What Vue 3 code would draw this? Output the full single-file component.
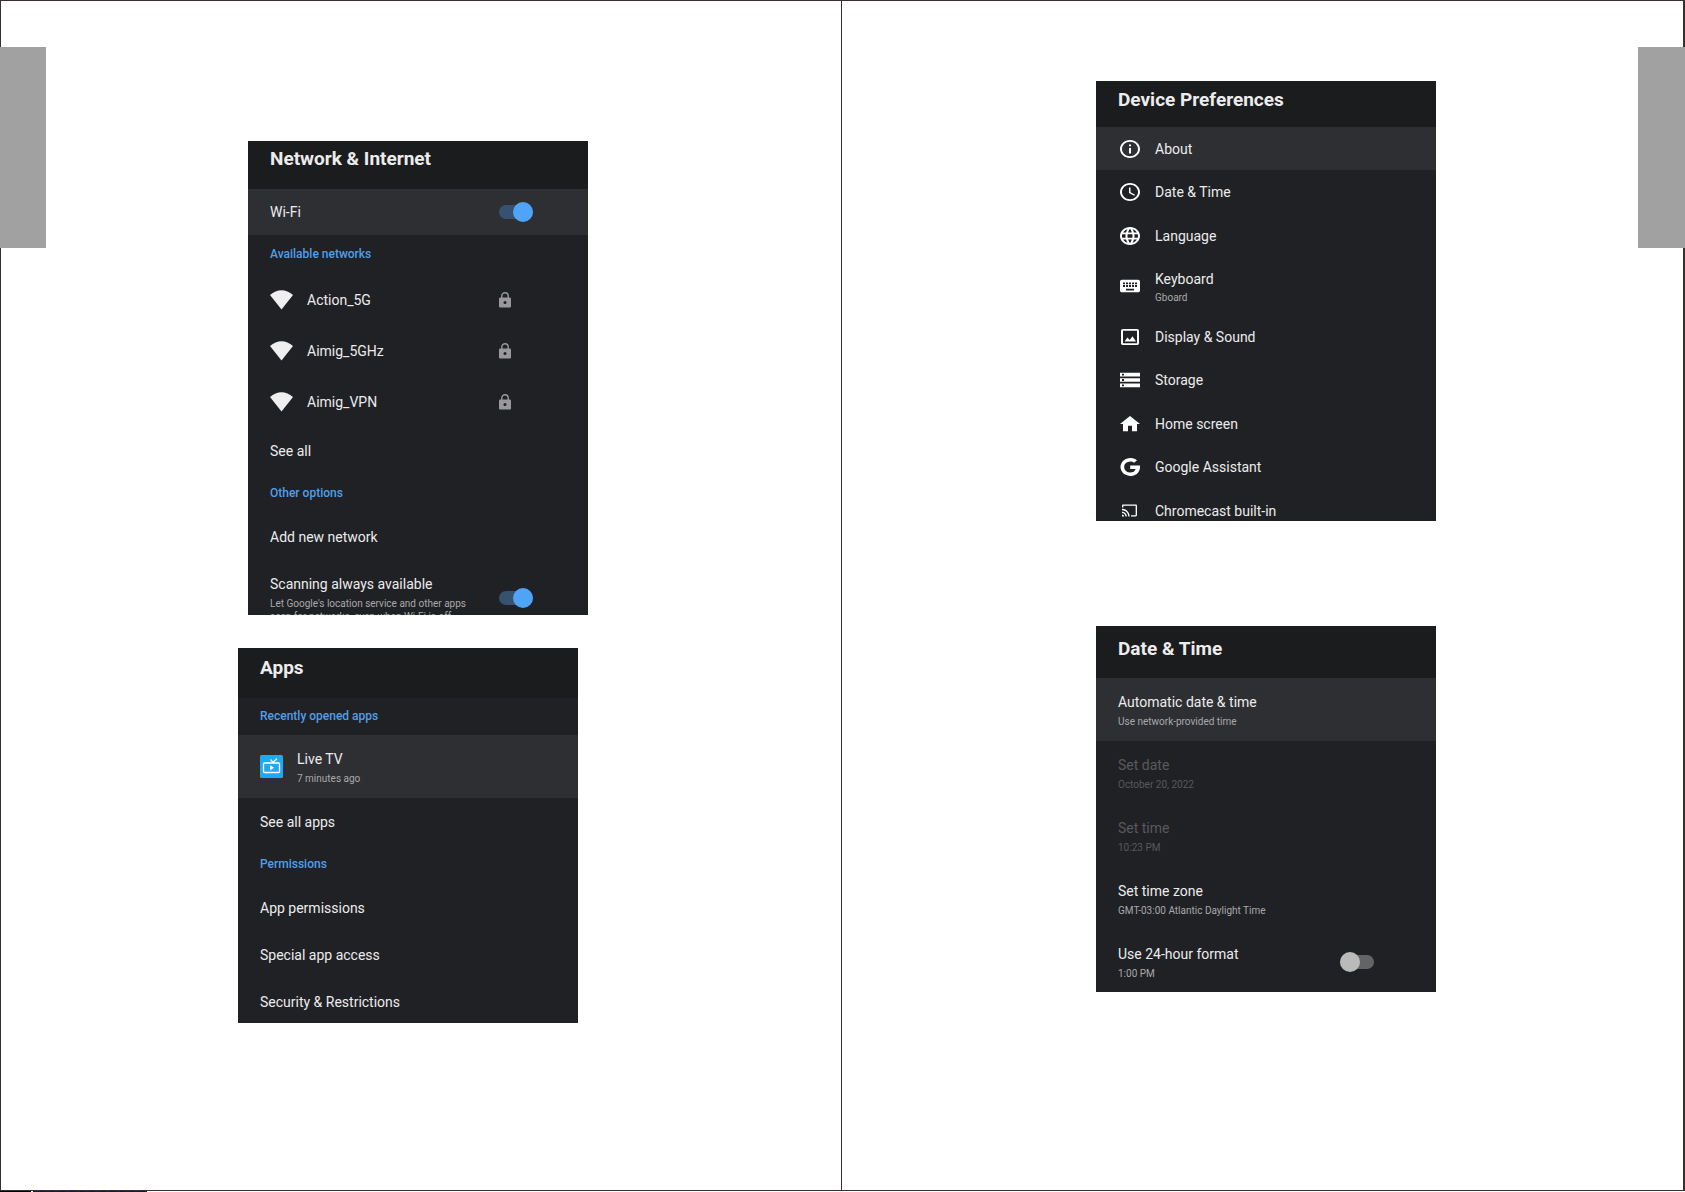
<script setup>
import { ref } from 'vue'

const icons = {
  info: 'M11 7h2v2h-2zm0 4h2v6h-2zm1-9C6.48 2 2 6.48 2 12s4.48 10 10 10 10-4.48 10-10S17.52 2 12 2zm0 18c-4.41 0-8-3.59-8-8s3.59-8 8-8 8 3.59 8 8-3.59 8-8 8z',
  clock: 'M11.99 2C6.47 2 2 6.48 2 12s4.47 10 9.99 10C17.52 22 22 17.52 22 12S17.52 2 11.99 2zM12 20c-4.42 0-8-3.58-8-8s3.58-8 8-8 8 3.58 8 8-3.58 8-8 8zm.5-13H11v6l5.25 3.15.75-1.23-4.5-2.67z',
  globe: 'M11.99 2C6.47 2 2 6.48 2 12s4.47 10 9.99 10C17.52 22 22 17.52 22 12S17.52 2 11.99 2zm6.93 6h-2.95c-.32-1.25-.78-2.45-1.38-3.56 1.84.63 3.37 1.91 4.33 3.56zM12 4.04c.83 1.2 1.48 2.53 1.91 3.96h-3.82c.43-1.43 1.08-2.76 1.91-3.96zM4.26 14C4.1 13.36 4 12.69 4 12s.1-1.36.26-2h3.38c-.08.66-.14 1.32-.14 2s.06 1.34.14 2H4.26zm.82 2h2.95c.32 1.25.78 2.45 1.38 3.56-1.84-.63-3.37-1.9-4.33-3.56zm2.95-8H5.08c.96-1.66 2.49-2.93 4.33-3.56C8.81 5.55 8.35 6.75 8.03 8zM12 19.96c-.83-1.2-1.48-2.53-1.91-3.96h3.82c-.43 1.43-1.08 2.76-1.91 3.96zM14.34 14H9.66c-.09-.66-.16-1.32-.16-2s.07-1.35.16-2h4.68c.09.65.16 1.32.16 2s-.07 1.34-.16 2zm.25 5.56c.6-1.11 1.06-2.31 1.38-3.56h2.95c-.96 1.65-2.49 2.93-4.33 3.56zM16.36 14c.08-.66.14-1.32.14-2s-.06-1.34-.14-2h3.38c.16.64.26 1.31.26 2s-.1 1.36-.26 2h-3.38z',
  keyboard: 'M20 5H4c-1.1 0-2 .9-2 2v10c0 1.1.9 2 2 2h16c1.1 0 2-.9 2-2V7c0-1.100-.9-2-2-2zm-9 3h2v2h-2V8zm0 3h2v2h-2v-2zM8 8h2v2H8V8zm0 3h2v2H8v-2zm-1 2H5v-2h2v2zm0-3H5V8h2v2zm9 7H8v-2h8v2zm0-4h-2v-2h2v2zm0-3h-2V8h2v2zm3 3h-2v-2h2v2zm0-3h-2V8h2v2z',
  display: 'M5 3h14c1.100 0 2 .9 2 2v14c0 1.100-.9 2-2 2H5c-1.100 0-2-.9-2-2V5c0-1.100.9-2 2-2zm0 2v14h14V5H5zm1.500 12l3-4.500 2.200 2.800 2.800-4 3.500 5.700z',
  storage: 'M2 20h20v-4H2v4zm2-3h2v2H4v-2zM2 4v4h20V4H2zm4 3H4V5h2v2zm-4 7h20v-4H2v4zm2-3h2v2H4v-2z',
  home: 'M10 20v-6h4v6h5v-8h3L12 3 2 12h3v8z',
  google: 'M22 10.200H12.200v3.900h5.400c-.6 2.500-2.700 4-5.400 4a6.100 6.100 0 0 1 0-12.200c1.500 0 2.900.5 3.900 1.400l2.900-2.900A10 10 0 1 0 12.200 22C17.900 22 22.600 18 22 10.200z',
  cast: 'M20.500 4h-17C2.700 4 2 4.700 2 5.600V8h1.800V5.800h16.400v12.400H14V20h6.500c.8 0 1.500-.7 1.500-1.600V5.600c0-.9-.7-1.600-1.500-1.600zM2 17.200V20h2.800c0-1.600-1.200-2.800-2.800-2.800zm0-3.700v1.800c2.600 0 4.700 2.100 4.700 4.700h1.800c0-3.600-2.900-6.500-6.500-6.500zm0-3.700v1.800c4.600 0 8.400 3.800 8.400 8.400h1.800C12.200 14.400 7.600 9.800 2 9.800z'
}

const network = ref([
  { title: 'Wi-Fi', toggle: true, on: true, active: true },
  { section: 'Available networks' },
  { title: 'Action_5G', wifi: true },
  { title: 'Aimig_5GHz', wifi: true },
  { title: 'Aimig_VPN', wifi: true },
  { title: 'See all' },
  { section: 'Other options' },
  { title: 'Add new network' },
  {
    title: 'Scanning always available',
    sub: ["Let Google's location service and other apps", 'scan for networks, even when Wi-Fi is off'],
    toggle: true,
    on: true
  }
])

const apps = ref([
  { section: 'Recently opened apps' },
  { title: 'Live TV', sub: ['7 minutes ago'], tv: true, active: true },
  { title: 'See all apps' },
  { section: 'Permissions' },
  { title: 'App permissions' },
  { title: 'Special app access' },
  { title: 'Security & Restrictions' }
])

const device = ref([
  { title: 'About', icon: 'info', active: true },
  { title: 'Date & Time', icon: 'clock' },
  { title: 'Language', icon: 'globe' },
  { title: 'Keyboard', sub: ['Gboard'], icon: 'keyboard' },
  { title: 'Display & Sound', icon: 'display' },
  { title: 'Storage', icon: 'storage' },
  { title: 'Home screen', icon: 'home' },
  { title: 'Google Assistant', icon: 'google' },
  { title: 'Chromecast built-in', icon: 'cast' }
])

const dateTime = ref([
  { title: 'Automatic date & time', sub: ['Use network-provided time'], active: true },
  { title: 'Set date', sub: ['October 20, 2022'], disabled: true },
  { title: 'Set time', sub: ['10:23 PM'], disabled: true },
  { title: 'Set time zone', sub: ['GMT-03:00 Atlantic Daylight Time'] },
  { title: 'Use 24-hour format', sub: ['1:00 PM'], toggle: true, on: false }
])

const pages = [
  [
    { name: 'network', heading: 'Network & Internet', rows: network },
    { name: 'apps', heading: 'Apps', rows: apps }
  ],
  [
    { name: 'device', heading: 'Device Preferences', rows: device },
    { name: 'date', heading: 'Date & Time', rows: dateTime }
  ]
]
</script>

<template>
  <main class="spread">
    <div v-for="(panels, p) in pages" :key="p" class="page">
      <section v-for="panel in panels" :key="panel.name" class="panel" :class="panel.name">
        <h2 class="heading">{{ panel.heading }}</h2>
        <template v-for="(row, i) in panel.rows.value" :key="i">
          <h3 v-if="row.section" class="section">{{ row.section }}</h3>
          <component
            :is="row.toggle ? 'label' : 'button'"
            v-else
            class="row"
            :class="{ active: row.active, tall: row.sub, wifi: row.wifi, disabled: row.disabled }"
            :disabled="row.disabled || undefined"
          >
            <span v-if="row.wifi || row.tv || row.icon" class="lead">
              <svg v-if="row.wifi" class="wifi-icon" viewBox="0 0 23 20" aria-hidden="true">
                <path d="M0 5C7-1.500 16-1.500 23 5L11.500 19.500z" />
              </svg>
              <svg v-else-if="row.tv" class="tv-icon" viewBox="0 0 23 23" aria-hidden="true">
                <rect width="23" height="23" rx="1.500" fill="#1cabf3" />
                <rect x="3.500" y="8" width="16" height="9.500" rx="1" fill="none" stroke="#fff" stroke-width="1.300" />
                <path d="M10.500 4.500L13 7.500L17 3.500" fill="none" stroke="#fff" stroke-width="1.200" />
                <path d="M10 10.200v5l4-2.500z" fill="#fff" />
              </svg>
              <svg
                v-else
                class="icon"
                :class="row.icon"
                viewBox="2 2 20 20"
                preserveAspectRatio="none"
                aria-hidden="true"
              >
                <path :d="icons[row.icon]" fill-rule="evenodd" />
              </svg>
            </span>
            <span class="text">
              <span class="title">{{ row.title }}</span>
              <span v-if="row.sub" class="sub">
                <span v-for="line in row.sub" :key="line" class="line">{{ line }}</span>
              </span>
            </span>
            <span v-if="row.wifi" class="trail">
              <svg class="lock" viewBox="0 0 12 16" aria-hidden="true">
                <path d="M2.800 6V4a3.200 3.200 0 0 1 6.400 0v2" fill="none" stroke="#99999b" stroke-width="1.400" />
                <rect y="5.500" width="12" height="10" rx="1.300" fill="#99999b" />
                <circle cx="6" cy="10.500" r="1.500" fill="#202124" />
              </svg>
            </span>
            <span v-else-if="row.toggle" class="trail">
              <input v-model="row.on" class="switch" type="checkbox" />
            </span>
          </component>
        </template>
      </section>
    </div>
    <div class="tab tab-left"></div>
    <div class="tab tab-right"></div>
    <div class="strip"></div>
  </main>
</template>

<style>
body {
  margin: 0;
  background: #fff;
}
</style>

<style scoped>
.spread {
  position: relative;
  box-sizing: border-box;
  display: grid;
  grid-template-columns: 841fr 844fr;
  min-height: 100vh;
  padding-bottom: 1px;
  font-family: Roboto, "Liberation Sans", sans-serif;
}

.page {
  box-sizing: border-box;
  display: flex;
  flex-direction: column;
  align-items: center;
  border: 1px solid #3a2f30;
}

.page:first-child {
  border-right: 0;
  padding: 140px 6px 60px 0;
}

.page:nth-child(2) {
  border-right-width: 2px;
  padding: 80px 0 60px 7px;
}

.panel {
  width: 340px;
  max-width: 100%;
  overflow: hidden;
  background: #202124;
  color: #ececed;
}

.network {
  height: 474px;
}

.apps {
  height: 375px;
  margin-top: 33px;
  margin-right: 20px;
}

.device {
  height: 440px;
}

.date {
  height: 366px;
  margin-top: 105px;
}

.heading {
  box-sizing: border-box;
  height: 48px;
  margin: 0;
  padding: 6px 22px 0;
  background: #1b1c1e;
  font-size: 19px;
  font-weight: 700;
  line-height: 24px;
}

.apps .heading {
  height: 50px;
  padding-top: 8px;
}

.device .heading {
  height: 46px;
  padding-top: 7px;
}

.date .heading {
  height: 52px;
  padding-top: 11px;
}

.section {
  margin: 0;
  padding: 0 22px;
  color: #4f9fea;
  font-size: 12px;
  font-weight: 500;
  line-height: 39px;
}

.heading + .section {
  line-height: 37px;
}

.row {
  box-sizing: border-box;
  display: flex;
  align-items: center;
  width: 100%;
  height: 47px;
  margin: 0;
  padding: 0 55px 0 22px;
  border: 0;
  background: none;
  color: inherit;
  font: inherit;
  text-align: left;
  cursor: pointer;
}

.network .active {
  height: 46px;
}

.row.wifi {
  height: 51px;
}

.row.tall {
  height: auto;
}

.row.active {
  background: #2e2f33;
}

.row.disabled {
  color: #59595c;
  cursor: default;
}

.device .row:not(.tall) {
  height: 43px;
}

.device .row:not(.tall):nth-child(odd) {
  height: 44px;
}

.date .row {
  padding-right: 62px;
}

.lead {
  display: flex;
  flex: 0 0 23px;
  justify-content: center;
  margin-right: 14px;
}

.text {
  flex: 1;
  white-space: nowrap;
}

.tall .text {
  padding: 14px 0 13px;
}

.device .tall .text {
  padding: 12px 0 11px;
}

.title {
  display: block;
  font-size: 14px;
  line-height: 20px;
}

.sub {
  display: block;
  margin-top: 3px;
  color: #a9a9ab;
  font-size: 10px;
  line-height: 13px;
}

.device .sub {
  margin-top: 2px;
}

.disabled .sub {
  color: inherit;
}

.line {
  display: block;
}

.trail {
  display: flex;
  flex: 0 0 34px;
}

.wifi-icon {
  width: 23px;
  height: 20px;
  fill: #efefef;
}

.tv-icon {
  width: 23px;
  height: 23px;
}

.icon {
  width: 20px;
  height: 18px;
  fill: #fff;
}

.icon.cast {
  width: 15px;
  height: 15px;
}

.lock {
  width: 12px;
  height: 16px;
}

.switch {
  display: flex;
  align-items: center;
  width: 34px;
  height: 14px;
  margin: 0;
  border-radius: 7px;
  background: #636466;
  appearance: none;
  cursor: pointer;
}

.switch::before {
  width: 20px;
  height: 20px;
  border-radius: 50%;
  background: #bababa;
  content: "";
}

.switch:checked {
  justify-content: flex-end;
  background: #36526f;
}

.switch:checked::before {
  background: #4fa4f8;
}

.tab {
  position: absolute;
  top: 47px;
  width: 46px;
  height: 201px;
  background: #a1a1a1;
}

.tab-left {
  left: 0;
}

.tab-right {
  right: 0;
  width: 47px;
}

/* printer registration strip along the bottom edge */
.strip {
  position: absolute;
  bottom: 0;
  left: 0;
  width: 147px;
  height: 1px;
  background:
    linear-gradient(90deg, #000 31px, #fff 31px, #fff 33px, transparent 33px),
    repeating-linear-gradient(90deg, #18123a 0 3px, #3a1020 3px 5px, #102a18 5px 7px, #1a1a60 7px 10px);
}
</style>
